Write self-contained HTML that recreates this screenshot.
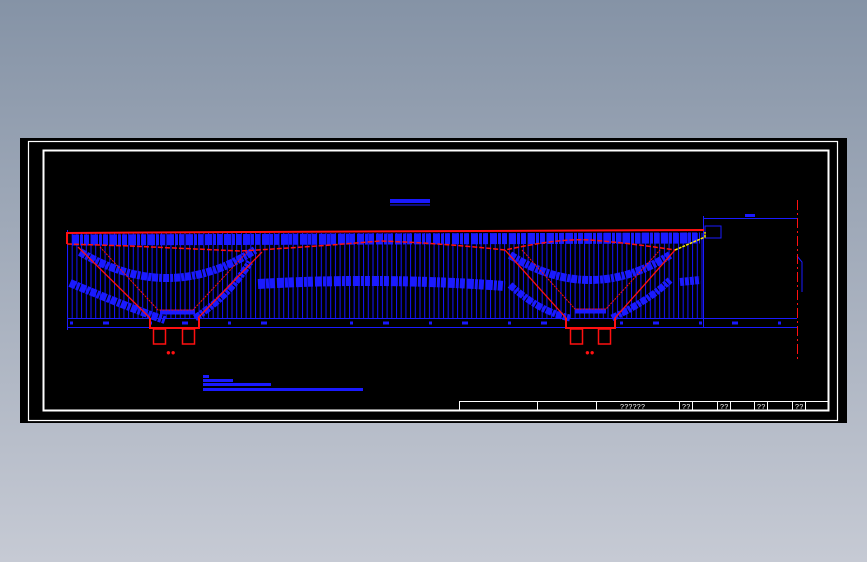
<!DOCTYPE html>
<html><head><meta charset="utf-8"><style>
html,body{margin:0;padding:0;width:867px;height:562px;overflow:hidden;background:linear-gradient(#8593a6,#c6cad4);}
svg{display:block}
</style></head><body>
<svg width="867" height="562" viewBox="0 0 867 562" xmlns="http://www.w3.org/2000/svg" font-family="Liberation Mono, monospace">
<defs>
<pattern id="vl" x="67" y="0" width="4.7" height="10" patternUnits="userSpaceOnUse">
<rect x="0" y="0" width="1" height="10" fill="#1212ff"/>
</pattern>
</defs>
<rect x="20" y="138" width="827" height="285" fill="#000"/>
<rect x="28.5" y="141.5" width="809" height="279" fill="none" stroke="#fff" stroke-width="1.2"/>
<rect x="43.5" y="150.5" width="785" height="260" fill="none" stroke="#fff" stroke-width="2"/>
<g stroke="#fff" stroke-width="1" fill="none">
<line x1="459" y1="401.5" x2="828" y2="401.5"/>
<line x1="459.5" y1="401" x2="459.5" y2="410"/>
<line x1="537.5" y1="401" x2="537.5" y2="410"/>
<line x1="596.5" y1="401" x2="596.5" y2="410"/>
<line x1="679.5" y1="401" x2="679.5" y2="410"/>
<line x1="692.5" y1="401" x2="692.5" y2="410"/>
<line x1="717.5" y1="401" x2="717.5" y2="410"/>
<line x1="730.5" y1="401" x2="730.5" y2="410"/>
<line x1="754.5" y1="401" x2="754.5" y2="410"/>
<line x1="767.5" y1="401" x2="767.5" y2="410"/>
<line x1="792.5" y1="401" x2="792.5" y2="410"/>
<line x1="805.5" y1="401" x2="805.5" y2="410"/>
</g>
<g fill="#fff" font-size="7">
<text x="620" y="409">??????</text>
<text x="682" y="409">??</text>
<text x="720" y="409">??</text>
<text x="757" y="409">??</text>
<text x="795" y="409">??</text>
</g>
<rect x="67" y="233" width="637" height="85" fill="url(#vl)"/>
<rect x="390" y="199" width="40" height="4" fill="#1a1aff"/>
<line x1="390" y1="205" x2="430" y2="205" stroke="#1a1aff" stroke-width="1"/>
<g stroke="#1a1aff" stroke-width="1" fill="none">
<line x1="703" y1="218.5" x2="797" y2="218.5"/>
<line x1="703.5" y1="216" x2="703.5" y2="328"/>
<line x1="67" y1="318.5" x2="797" y2="318.5"/>
<line x1="67" y1="327.5" x2="797" y2="327.5"/>
<line x1="67.5" y1="230" x2="67.5" y2="330"/>
<path d="M797 256 L802 262 L802 292"/>
</g>
<rect x="745" y="214" width="10" height="3" fill="#1a1aff"/>
<rect x="705" y="226" width="16" height="12" fill="none" stroke="#1a1aff"/>
<g fill="none" stroke="#1a1aff">
<path d="M72 240 L700 238" stroke-width="11" stroke-dasharray="7 1 3 1 5 2"/>
<path d="M80 252 Q170 305 255 250" stroke-width="8" stroke-dasharray="6 1 3 1"/>
<path d="M70 283 Q140 312 165 320" stroke-width="8" stroke-dasharray="6 1 3 1"/>
<path d="M195 318 Q230 295 250 262" stroke-width="7" stroke-dasharray="6 1 3 1"/>
<path d="M258 284 Q380 277 505 286" stroke-width="10" stroke-dasharray="7 1 3 1 5 2"/>
<path d="M510 255 Q590 305 670 255" stroke-width="8" stroke-dasharray="6 1 3 1"/>
<path d="M510 285 Q540 312 570 318" stroke-width="7" stroke-dasharray="6 1 3 1"/>
<path d="M612 318 Q650 300 670 280" stroke-width="7" stroke-dasharray="6 1 3 1"/>
<path d="M160 312 L195 312" stroke-width="5"/>
<path d="M575 311 L606 311" stroke-width="5"/>
<path d="M680 282 L700 280" stroke-width="8" stroke-dasharray="4 1"/>
<path d="M70 323 L300 323 M350 323 L560 323 M620 323 L797 323" stroke-width="3" stroke-dasharray="3 30 6 40"/>
</g>
<g fill="none" stroke="#ff1010">
<path d="M67 244 L67 233 L245 232 L704 230" stroke-width="2"/>
<path d="M67 244 L130 246 L240 251 Q310 247 380 241 Q440 243 505 250 Q560 238 590 240 Q630 243 675 250" stroke-width="1.5" stroke-dasharray="5 2"/>
<path d="M78 247 L150 318" stroke-width="1.3"/>
<path d="M100 247 L158 310 L193 310 L248 251" stroke-width="1" stroke-dasharray="2 1"/>
<path d="M198 318 L262 252" stroke-width="1.3"/>
<path d="M150 318 L150 328 L199 328 L199 318" stroke-width="2"/>
<rect x="153.5" y="329" width="12" height="15" stroke-width="1.5"/>
<rect x="182.5" y="329" width="12" height="15" stroke-width="1.5"/>
<path d="M505 250 L566 318" stroke-width="1.3"/>
<path d="M522 250 L575 309 L606 309 L660 250" stroke-width="1" stroke-dasharray="2 1"/>
<path d="M615 318 L675 250" stroke-width="1.3"/>
<path d="M566 318 L566 328 L615 328 L615 318" stroke-width="2"/>
<rect x="570.5" y="329" width="12" height="15" stroke-width="1.5"/>
<rect x="598.5" y="329" width="12" height="15" stroke-width="1.5"/>
<line x1="797.5" y1="200" x2="797.5" y2="362" stroke-width="1" stroke-dasharray="10 3 2 3"/>
</g>
<path d="M675 250 L705 237 L705 232" fill="none" stroke="#ffee00" stroke-width="1.5" stroke-dasharray="3 1"/>
<g fill="#ff1010" font-size="8"><text x="166" y="355">●●</text><text x="585" y="355">●●</text></g>
<g fill="#1a1aff">
<rect x="203" y="375" width="6" height="3"/>
<rect x="203" y="379" width="30" height="3"/>
<rect x="203" y="383" width="68" height="3"/>
<rect x="203" y="388" width="160" height="3"/>
</g>
</svg>
</body></html>
